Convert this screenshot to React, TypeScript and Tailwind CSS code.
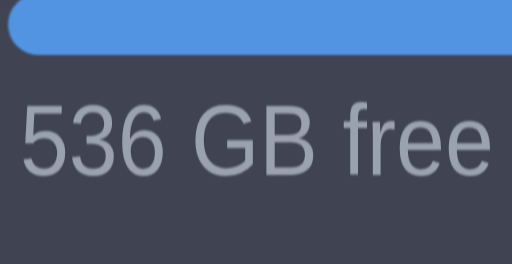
export default function App() {
  return (
    <div className="h-[264px] w-[512px] overflow-hidden bg-[#404452]">
      <div className="-mr-[12px] -mt-[6px] ml-[8px] h-[61px] rounded-l-full bg-[#5294e2] blur-[1px]" />
      <div className="mt-[35px] pl-[20px]">
        <div className="origin-left scale-x-[0.87] whitespace-nowrap font-['Liberation_Sans',sans-serif] text-[101px] leading-none text-[#9aa2b0] blur-[0.8px]">
          536 GB free
        </div>
      </div>
    </div>
  );
}
